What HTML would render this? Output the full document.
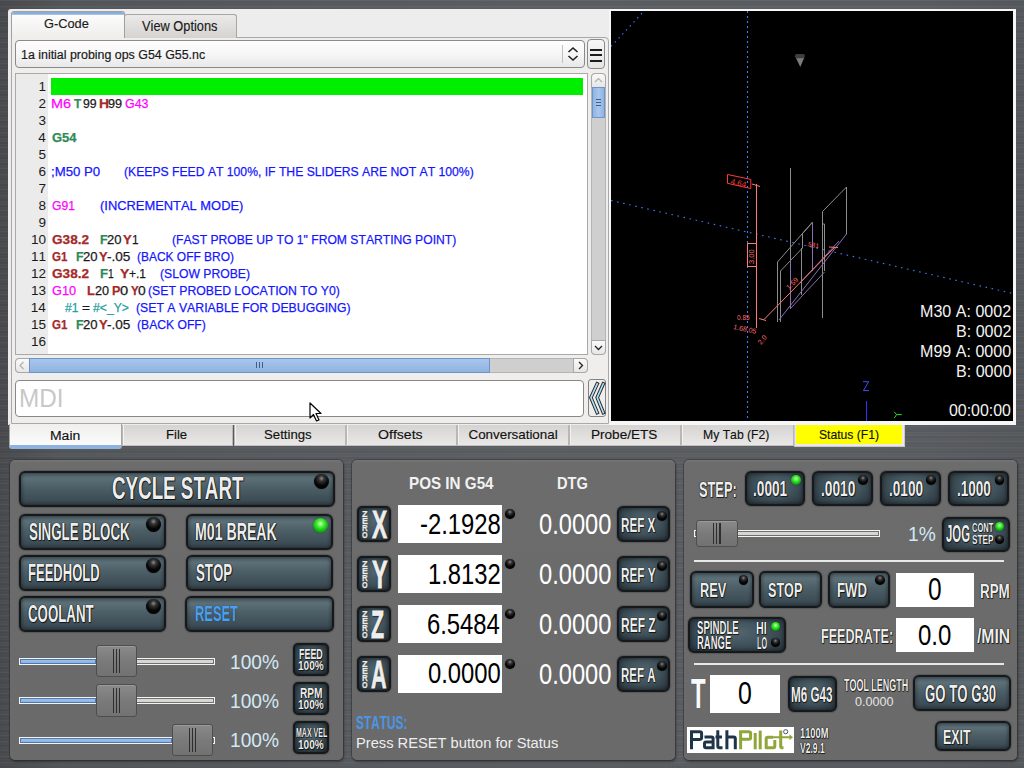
<!DOCTYPE html><html><head><meta charset="utf-8"><style>
*{margin:0;padding:0;box-sizing:border-box}
html,body{width:1024px;height:768px;overflow:hidden}
body{position:relative;font-family:"Liberation Sans",sans-serif;
 background:#484a4d;}
.a{position:absolute}
.t{position:absolute;white-space:pre;line-height:1;transform-origin:0 0;font-kerning:none;font-family:"Liberation Sans",sans-serif}
</style></head><body><div class="a" style="left:0px;top:0px;width:1024px;height:768px;background:repeating-linear-gradient(180deg,rgba(255,255,255,0.035) 0px,rgba(0,0,0,0.035) 2px,rgba(255,255,255,0.0) 3px),repeating-linear-gradient(180deg,rgba(255,255,255,0.03) 0px,rgba(0,0,0,0.04) 3px,rgba(255,255,255,0.02) 7px),linear-gradient(90deg,#47494d 0%,#53565a 6%,#5b5e62 50%,#5a5d61 90%,#55585c 100%)"></div><div class="a" style="left:8px;top:9px;width:601px;height:416px;background:#ededed;border-top-left-radius:3px;"></div><div class="a" style="left:11px;top:37px;width:598px;height:387px;border:1px solid #a8a8a8;border-top-right-radius:4px;background:#efeeed;"></div><div class="a" style="left:124px;top:14px;width:113px;height:24px;background:linear-gradient(180deg,#ebeae8,#d5d3d1);border:1px solid #a9a7a5;border-bottom:none;border-radius:3px 3px 0 0;"></div><div class="a" style="left:11px;top:11px;width:114px;height:27px;background:linear-gradient(180deg,#fdfdfd,#efeeed);border:1px solid #a0a0a0;border-bottom:none;border-radius:3px 3px 0 0;"></div><div class="a" style="left:12px;top:12px;width:112px;height:3px;background:#88aedc;border-radius:2px 2px 0 0;border-bottom:1px solid #a9c3e6"></div><div class="t" style="left:44.05px;top:16.580px;font-size:13.37px;color:#1a1a1a;transform:scaleX(0.9594);-webkit-text-stroke:0.15px #1a1a1a;">G-Code</div><div class="t" style="left:142.14px;top:19.882px;font-size:13.81px;color:#1a1a1a;transform:scaleX(0.9282);-webkit-text-stroke:0.15px #1a1a1a;">View Options</div><div class="a" style="left:15px;top:40px;width:570px;height:28px;background:linear-gradient(180deg,#fefefe 0%,#f6f6f6 50%,#e8e8e8 100%);border:1px solid #8c8a88;border-radius:4px;"></div><div class="a" style="left:562px;top:45px;width:1px;height:18px;background:#c0c0c0"></div><svg class="a" style="left:566px;top:46px" width="14" height="16"><path d="M2.5 6 L7 2 L11.5 6 M2.5 10 L7 14 L11.5 10" fill="none" stroke="#222" stroke-width="1.6"/></svg><div class="t" style="left:20.85px;top:48.003px;font-size:13.52px;color:#1a1a1a;transform:scaleX(0.9178);-webkit-text-stroke:0.2px #1a1a1a;">1a initial probing ops G54 G55.nc</div><div class="a" style="left:587px;top:39px;width:18px;height:30px;background:linear-gradient(180deg,#f6f6f6,#e4e4e4);border:1px solid #8c8a88;border-radius:4px;"></div><div class="a" style="left:590px;top:49px;width:12px;height:2px;background:#1a1a1a"></div><div class="a" style="left:590px;top:54px;width:12px;height:2px;background:#1a1a1a"></div><div class="a" style="left:590px;top:60px;width:12px;height:2px;background:#1a1a1a"></div><div class="a" style="left:15px;top:73px;width:573px;height:282px;background:#fff;border:1px solid #a9a9a9;"></div><div class="a" style="left:16px;top:74px;width:32px;height:280px;background:#ebebeb"></div><div class="a" style="left:51px;top:78px;width:532px;height:17px;background:#00ee00"></div><div class="t" style="left:38.54px;top:80.003px;font-size:13.52px;color:#1a1a1a;">1</div><div class="t" style="left:38.56px;top:97.003px;font-size:13.52px;color:#1a1a1a;">2</div><div class="t" style="left:38.48px;top:114.003px;font-size:13.52px;color:#1a1a1a;">3</div><div class="t" style="left:38.28px;top:131.003px;font-size:13.52px;color:#1a1a1a;">4</div><div class="t" style="left:38.45px;top:148.003px;font-size:13.52px;color:#1a1a1a;">5</div><div class="t" style="left:38.48px;top:165.003px;font-size:13.52px;color:#1a1a1a;">6</div><div class="t" style="left:38.56px;top:182.003px;font-size:13.52px;color:#1a1a1a;">7</div><div class="t" style="left:38.47px;top:199.003px;font-size:13.52px;color:#1a1a1a;">8</div><div class="t" style="left:38.52px;top:216.003px;font-size:13.52px;color:#1a1a1a;">9</div><div class="t" style="left:30.89px;top:233.003px;font-size:13.52px;color:#1a1a1a;">10</div><div class="t" style="left:31.02px;top:250.003px;font-size:13.52px;color:#1a1a1a;">11</div><div class="t" style="left:31.04px;top:267.003px;font-size:13.52px;color:#1a1a1a;">12</div><div class="t" style="left:30.96px;top:284.003px;font-size:13.52px;color:#1a1a1a;">13</div><div class="t" style="left:30.76px;top:301.003px;font-size:13.52px;color:#1a1a1a;">14</div><div class="t" style="left:30.93px;top:318.003px;font-size:13.52px;color:#1a1a1a;">15</div><div class="t" style="left:30.96px;top:335.003px;font-size:13.52px;color:#1a1a1a;">16</div><div class="t" style="left:51.42px;top:97.045px;font-size:13.44px;color:#ff00ff;transform:scaleX(1.0720);-webkit-text-stroke:0.25px #ff00ff;">M6</div><div class="t" style="left:73.57px;top:97.045px;font-size:13.44px;font-weight:bold;color:#2e8b57;transform:scaleX(0.8845);-webkit-text-stroke:0.25px #2e8b57;">T</div><div class="t" style="left:82.52px;top:97.045px;font-size:13.44px;color:#1a1a1a;transform:scaleX(0.9136);-webkit-text-stroke:0.25px #1a1a1a;">99</div><div class="t" style="left:98.57px;top:97.045px;font-size:13.44px;font-weight:bold;color:#a52a2a;transform:scaleX(1.0378);-webkit-text-stroke:0.25px #a52a2a;">H</div><div class="t" style="left:108.31px;top:97.045px;font-size:13.44px;color:#1a1a1a;transform:scaleX(0.9428);-webkit-text-stroke:0.25px #1a1a1a;">99</div><div class="t" style="left:124.98px;top:97.045px;font-size:13.44px;color:#ff00ff;transform:scaleX(0.9239);-webkit-text-stroke:0.25px #ff00ff;">G43</div><div class="t" style="left:52.07px;top:131.045px;font-size:13.44px;font-weight:bold;color:#2e8b57;transform:scaleX(0.9605);-webkit-text-stroke:0.25px #2e8b57;">G54</div><div class="t" style="left:50.82px;top:165.045px;font-size:13.44px;color:#1515ff;transform:scaleX(0.9810);-webkit-text-stroke:0.25px #1515ff;">;M50 P0</div><div class="t" style="left:123.94px;top:165.045px;font-size:13.44px;color:#1515ff;transform:scaleX(0.9059);-webkit-text-stroke:0.25px #1515ff;">(KEEPS FEED AT 100%, IF THE SLIDERS ARE NOT AT 100%)</div><div class="t" style="left:51.99px;top:199.045px;font-size:13.44px;color:#ff00ff;transform:scaleX(0.9015);-webkit-text-stroke:0.25px #ff00ff;">G91</div><div class="t" style="left:99.70px;top:199.045px;font-size:13.44px;color:#1515ff;transform:scaleX(0.9603);-webkit-text-stroke:0.25px #1515ff;">(INCREMENTAL MODE)</div><div class="t" style="left:51.84px;top:233.045px;font-size:13.44px;font-weight:bold;color:#a52a2a;transform:scaleX(1.0134);-webkit-text-stroke:0.25px #a52a2a;">G38.2</div><div class="t" style="left:99.87px;top:233.045px;font-size:13.44px;font-weight:bold;color:#2e8b57;transform:scaleX(0.9240);-webkit-text-stroke:0.25px #2e8b57;">F</div><div class="t" style="left:107.05px;top:233.045px;font-size:13.44px;color:#1a1a1a;transform:scaleX(0.9674);-webkit-text-stroke:0.25px #1a1a1a;">20</div><div class="t" style="left:122.68px;top:233.045px;font-size:13.44px;font-weight:bold;color:#a52a2a;transform:scaleX(0.9744);-webkit-text-stroke:0.25px #a52a2a;">Y</div><div class="t" style="left:131.50px;top:233.045px;font-size:13.44px;color:#1a1a1a;transform:scaleX(0.8801);-webkit-text-stroke:0.25px #1a1a1a;">1</div><div class="t" style="left:172.25px;top:233.045px;font-size:13.44px;color:#1515ff;transform:scaleX(0.9036);-webkit-text-stroke:0.25px #1515ff;">(FAST PROBE UP TO 1" FROM STARTING POINT)</div><div class="t" style="left:51.93px;top:250.045px;font-size:13.44px;font-weight:bold;color:#a52a2a;transform:scaleX(0.8586);-webkit-text-stroke:0.25px #a52a2a;">G1</div><div class="t" style="left:75.77px;top:250.045px;font-size:13.44px;font-weight:bold;color:#2e8b57;transform:scaleX(0.9240);-webkit-text-stroke:0.25px #2e8b57;">F</div><div class="t" style="left:82.84px;top:250.045px;font-size:13.44px;color:#1a1a1a;transform:scaleX(0.9747);-webkit-text-stroke:0.25px #1a1a1a;">20</div><div class="t" style="left:98.58px;top:250.045px;font-size:13.44px;font-weight:bold;color:#a52a2a;transform:scaleX(0.9627);-webkit-text-stroke:0.25px #a52a2a;">Y</div><div class="t" style="left:107.10px;top:250.045px;font-size:13.44px;color:#1a1a1a;transform:scaleX(1.0092);-webkit-text-stroke:0.25px #1a1a1a;">-.05</div><div class="t" style="left:136.76px;top:250.045px;font-size:13.44px;color:#1515ff;transform:scaleX(0.8896);-webkit-text-stroke:0.25px #1515ff;">(BACK OFF BRO)</div><div class="t" style="left:51.84px;top:267.045px;font-size:13.44px;font-weight:bold;color:#a52a2a;transform:scaleX(1.0134);-webkit-text-stroke:0.25px #a52a2a;">G38.2</div><div class="t" style="left:99.82px;top:267.045px;font-size:13.44px;font-weight:bold;color:#2e8b57;transform:scaleX(0.9826);-webkit-text-stroke:0.25px #2e8b57;">F</div><div class="t" style="left:107.52px;top:267.045px;font-size:13.44px;color:#1a1a1a;transform:scaleX(0.7593);-webkit-text-stroke:0.25px #1a1a1a;">1</div><div class="t" style="left:120.16px;top:267.045px;font-size:13.44px;font-weight:bold;color:#a52a2a;transform:scaleX(1.0390);-webkit-text-stroke:0.25px #a52a2a;">Y</div><div class="t" style="left:129.31px;top:267.045px;font-size:13.44px;color:#1a1a1a;transform:scaleX(0.8932);-webkit-text-stroke:0.25px #1a1a1a;">+.1</div><div class="t" style="left:159.64px;top:267.045px;font-size:13.44px;color:#1515ff;transform:scaleX(0.9063);-webkit-text-stroke:0.25px #1515ff;">(SLOW PROBE)</div><div class="t" style="left:51.86px;top:284.045px;font-size:13.44px;color:#ff00ff;transform:scaleX(0.9503);-webkit-text-stroke:0.25px #ff00ff;">G10</div><div class="t" style="left:87.34px;top:284.045px;font-size:13.44px;font-weight:bold;color:#a52a2a;transform:scaleX(0.9569);-webkit-text-stroke:0.25px #a52a2a;">L</div><div class="t" style="left:94.97px;top:284.045px;font-size:13.44px;color:#1a1a1a;transform:scaleX(0.9383);-webkit-text-stroke:0.25px #1a1a1a;">20</div><div class="t" style="left:111.56px;top:284.045px;font-size:13.44px;font-weight:bold;color:#a52a2a;transform:scaleX(0.9335);-webkit-text-stroke:0.25px #a52a2a;">P</div><div class="t" style="left:120.43px;top:284.045px;font-size:13.44px;color:#1a1a1a;transform:scaleX(1.0895);-webkit-text-stroke:0.25px #1a1a1a;">0</div><div class="t" style="left:130.70px;top:284.045px;font-size:13.44px;font-weight:bold;color:#a52a2a;transform:scaleX(0.8570);-webkit-text-stroke:0.25px #a52a2a;">Y</div><div class="t" style="left:138.46px;top:284.045px;font-size:13.44px;color:#1a1a1a;transform:scaleX(1.0273);-webkit-text-stroke:0.25px #1a1a1a;">0</div><div class="t" style="left:148.34px;top:284.045px;font-size:13.44px;color:#1515ff;transform:scaleX(0.9109);-webkit-text-stroke:0.25px #1515ff;">(SET PROBED LOCATION TO Y0)</div><div class="t" style="left:65.05px;top:301.045px;font-size:13.44px;color:#20a0a0;transform:scaleX(0.8922);-webkit-text-stroke:0.25px #20a0a0;">#1</div><div class="t" style="left:81.64px;top:301.045px;font-size:13.44px;color:#1a1a1a;transform:scaleX(1.0108);-webkit-text-stroke:0.25px #1a1a1a;">=</div><div class="t" style="left:92.65px;top:301.045px;font-size:13.44px;color:#20a0a0;transform:scaleX(0.9075);-webkit-text-stroke:0.25px #20a0a0;">#&lt;_Y&gt;</div><div class="t" style="left:136.14px;top:301.045px;font-size:13.44px;color:#1515ff;transform:scaleX(0.9124);-webkit-text-stroke:0.25px #1515ff;">(SET A VARIABLE FOR DEBUGGING)</div><div class="t" style="left:51.93px;top:318.045px;font-size:13.44px;font-weight:bold;color:#a52a2a;transform:scaleX(0.8586);-webkit-text-stroke:0.25px #a52a2a;">G1</div><div class="t" style="left:75.77px;top:318.045px;font-size:13.44px;font-weight:bold;color:#2e8b57;transform:scaleX(0.9240);-webkit-text-stroke:0.25px #2e8b57;">F</div><div class="t" style="left:82.84px;top:318.045px;font-size:13.44px;color:#1a1a1a;transform:scaleX(0.9747);-webkit-text-stroke:0.25px #1a1a1a;">20</div><div class="t" style="left:98.58px;top:318.045px;font-size:13.44px;font-weight:bold;color:#a52a2a;transform:scaleX(0.9627);-webkit-text-stroke:0.25px #a52a2a;">Y</div><div class="t" style="left:107.10px;top:318.045px;font-size:13.44px;color:#1a1a1a;transform:scaleX(1.0092);-webkit-text-stroke:0.25px #1a1a1a;">-.05</div><div class="t" style="left:136.75px;top:318.045px;font-size:13.44px;color:#1515ff;transform:scaleX(0.9035);-webkit-text-stroke:0.25px #1515ff;">(BACK OFF)</div><div class="a" style="left:591px;top:73px;width:15px;height:282px;background:#cfcfcf;border:1px solid #b4b4b4;border-radius:4px;"></div><div class="a" style="left:591px;top:73px;width:15px;height:15px;background:linear-gradient(180deg,#fafafa,#e6e6e6);border:1px solid #a8a8a8;border-radius:4px 4px 0 0;"></div><svg class="a" style="left:593px;top:76px" width="11" height="9"><path d="M2 6 L5.5 2.5 L9 6" fill="none" stroke="#b0b0b0" stroke-width="1.2"/></svg><div class="a" style="left:592px;top:87px;width:13px;height:31px;background:linear-gradient(90deg,#8fb3e0,#a9c6ec 50%,#8fb3e0);border:1px solid #6d94c8;"></div><div class="a" style="left:596px;top:99px;width:5px;height:1px;background:#3d5f8f"></div><div class="a" style="left:596px;top:102px;width:5px;height:1px;background:#3d5f8f"></div><div class="a" style="left:596px;top:105px;width:5px;height:1px;background:#3d5f8f"></div><div class="a" style="left:591px;top:340px;width:15px;height:15px;background:linear-gradient(180deg,#fafafa,#e6e6e6);border:1px solid #a8a8a8;border-radius:0 0 4px 4px;"></div><svg class="a" style="left:593px;top:343px" width="11" height="9"><path d="M2 3 L5.5 6.5 L9 3" fill="none" stroke="#222" stroke-width="1.3"/></svg><div class="a" style="left:15px;top:358px;width:573px;height:15px;background:#cfcfcf;border:1px solid #b4b4b4;border-radius:4px;"></div><div class="a" style="left:15px;top:358px;width:15px;height:15px;background:linear-gradient(180deg,#fafafa,#e6e6e6);border:1px solid #a8a8a8;border-radius:4px 0 0 4px;"></div><svg class="a" style="left:17px;top:360px" width="11" height="11"><path d="M6.5 2 L3 5.5 L6.5 9" fill="none" stroke="#b0b0b0" stroke-width="1.2"/></svg><div class="a" style="left:29px;top:358px;width:461px;height:15px;background:linear-gradient(180deg,#a9c6ec,#8fb3e0);border:1px solid #6d94c8;"></div><div class="a" style="left:256px;top:362px;width:1px;height:6px;background:#3d5f8f"></div><div class="a" style="left:259px;top:362px;width:1px;height:6px;background:#3d5f8f"></div><div class="a" style="left:262px;top:362px;width:1px;height:6px;background:#3d5f8f"></div><div class="a" style="left:573px;top:358px;width:15px;height:15px;background:linear-gradient(180deg,#fafafa,#e6e6e6);border:1px solid #a8a8a8;border-radius:0 4px 4px 0;"></div><svg class="a" style="left:575px;top:360px" width="11" height="11"><path d="M4 2 L7.5 5.5 L4 9" fill="none" stroke="#222" stroke-width="1.3"/></svg><div class="a" style="left:15px;top:380px;width:569px;height:37px;background:#fff;border:1px solid #8a8886;border-radius:4px;"></div><div class="t" style="left:18.51px;top:385.657px;font-size:25.00px;color:#c8c8c8;transform:scaleX(0.9719);">MDI</div><div class="a" style="left:588px;top:379px;width:18px;height:38px;background:#efeeed;border:1px solid #858381;border-radius:3px;"></div><svg class="a" style="left:588px;top:379px" width="18" height="38"><path d="M9.2 4.8 L2.9 18.6 L9.2 33.6 M15.3 4.8 L9.2 18.6 L15.3 33.6" fill="none" stroke="#2a2a2a" stroke-width="3.6" stroke-linecap="square" stroke-linejoin="miter"/><path d="M9.2 4.8 L2.9 18.6 L9.2 33.6 M15.3 4.8 L9.2 18.6 L15.3 33.6" fill="none" stroke="#aee0fb" stroke-width="1.6" stroke-linecap="square"/></svg><div class="a" style="left:609px;top:9px;width:407px;height:416px;background:#f6f6f6;"></div><div class="a" style="left:611px;top:11px;width:402px;height:410px;background:#000;"></div><svg class="a" style="left:611px;top:11px" width="402" height="410" viewBox="611 11 402 410">
<g fill="none" stroke-linecap="butt">
<line x1="747.5" y1="11" x2="747.5" y2="421" stroke="#3d7bf0" stroke-width="1.1" stroke-dasharray="2 3"/>
<line x1="611" y1="46.5" x2="645" y2="10" stroke="#3d7bf0" stroke-width="1.1" stroke-dasharray="1.5 4"/>
<line x1="611" y1="200.5" x2="1013" y2="293.5" stroke="#3d7bf0" stroke-width="1.1" stroke-dasharray="1.6 4.6"/>
<line x1="866.5" y1="401" x2="866.5" y2="421" stroke="#3030ff" stroke-width="1"/>
</g>
<path d="M795.5 57 L804.5 57 L800.3 67 Z" fill="#7c7c7c"/><path d="M796 54 H804 L805 56 L803.5 58.3 H796.5 L794.5 56.3 Z" fill="#3e3e3e"/>
<g fill="none" stroke="#8c8c8c" stroke-width="1">
<line x1="790.5" y1="168" x2="790.5" y2="309"/>
<polyline points="822.5,318 822.5,211.5 846.5,187 846.5,234"/>
<polyline points="777.5,322 777.5,262 812.5,222"/>
<polyline points="780.5,322 780.5,271 802.5,248 802.5,233.5 812.5,222.5"/>
<line x1="801.5" y1="248" x2="801.5" y2="295"/>
<polyline points="824.5,271 824.5,224 822.5,224"/>
</g>
<g fill="none" stroke="#8a6fb0" stroke-width="1">
<line x1="790.5" y1="260" x2="790.5" y2="309"/>
<line x1="812.5" y1="222" x2="812.5" y2="271"/>
<line x1="846.5" y1="234" x2="779" y2="320"/>
<line x1="824.5" y1="272" x2="790" y2="309"/>
<line x1="839" y1="241" x2="800" y2="283"/>
</g>
<g fill="none" stroke="#ff7878" stroke-width="1">
<line x1="756.5" y1="184" x2="756.5" y2="328"/>
<polyline points="752,184 760,186.5"/>
<line x1="764" y1="319.5" x2="835" y2="247"/>
<polyline points="759,318.5 766,320.5"/>
<polyline points="829,247 838,247.5"/>
<polygon points="727.5,174.5 750.8,179.4 750.8,188.5 727.5,183.3" stroke="#ff3838"/>
<rect x="747.5" y="243.5" width="9" height="23"/>
</g>
<g fill="#ff6a6a" font-family="Liberation Sans" font-size="7">
<text x="730.5" y="184" transform="rotate(12 730 183)" fill="#ff3838" font-size="8">4.64</text>
<text x="754" y="264" transform="rotate(-90 754 264)" font-size="7.5">3.00</text>
<text x="737" y="320" font-size="6.5">0.85</text>
<text x="733" y="329" font-size="7" transform="rotate(12 733 329)">1.68.05</text>
<text x="761" y="345" font-size="7" transform="rotate(-50 761 345)">2.0</text>
<text x="806" y="246" font-size="6.5" transform="rotate(10 806 246)">.581</text>
<text x="789" y="290" font-size="7" transform="rotate(-45 789 290)">1.59</text>
</g>
<g stroke="#22dd22" stroke-width="1" fill="none"><polyline points="894.2,411.8 896.6,414.6 894.2,418.2"/><line x1="896.6" y1="414.6" x2="901.8" y2="414.6"/></g><path d="M863 381.7 H868.7 L863.4 390.6 H869" fill="none" stroke="#4848ff" stroke-width="1"/>
</svg><div class="t" style="left:920.08px;top:302.797px;font-size:16.42px;color:#f4f4f4;transform:scaleX(0.9798);">M30 A: 0002</div><div class="t" style="left:955.85px;top:323.297px;font-size:16.42px;color:#f4f4f4;transform:scaleX(0.9798);">B: 0002</div><div class="t" style="left:919.90px;top:342.797px;font-size:16.42px;color:#f4f4f4;transform:scaleX(0.9798);">M99 A: 0000</div><div class="t" style="left:955.67px;top:363.297px;font-size:16.42px;color:#f4f4f4;transform:scaleX(0.9798);">B: 0000</div><div class="t" style="left:949.18px;top:402.961px;font-size:15.99px;color:#f4f4f4;transform:scaleX(0.9952);">00:00:00</div><div class="a" style="left:121.6px;top:425px;width:111.9px;height:21px;background:linear-gradient(180deg,#d6d4d2,#e9e8e6);border-left:1px solid #b9b7b5;border-right:1px solid #b9b7b5;border-bottom:1px solid #c4c2c0;box-shadow:inset 1px 0 0 #f2f2f2;"></div><div class="a" style="left:233.5px;top:425px;width:112.0px;height:21px;background:linear-gradient(180deg,#d6d4d2,#e9e8e6);border-left:1px solid #b9b7b5;border-right:1px solid #b9b7b5;border-bottom:1px solid #c4c2c0;box-shadow:inset 1px 0 0 #f2f2f2;"></div><div class="a" style="left:345.5px;top:425px;width:111.80000000000001px;height:21px;background:linear-gradient(180deg,#d6d4d2,#e9e8e6);border-left:1px solid #b9b7b5;border-right:1px solid #b9b7b5;border-bottom:1px solid #c4c2c0;box-shadow:inset 1px 0 0 #f2f2f2;"></div><div class="a" style="left:457.3px;top:425px;width:112.09999999999997px;height:21px;background:linear-gradient(180deg,#d6d4d2,#e9e8e6);border-left:1px solid #b9b7b5;border-right:1px solid #b9b7b5;border-bottom:1px solid #c4c2c0;box-shadow:inset 1px 0 0 #f2f2f2;"></div><div class="a" style="left:569.4px;top:425px;width:111.20000000000005px;height:21px;background:linear-gradient(180deg,#d6d4d2,#e9e8e6);border-left:1px solid #b9b7b5;border-right:1px solid #b9b7b5;border-bottom:1px solid #c4c2c0;box-shadow:inset 1px 0 0 #f2f2f2;"></div><div class="a" style="left:680.6px;top:425px;width:113.0px;height:21px;background:linear-gradient(180deg,#d6d4d2,#e9e8e6);border-left:1px solid #b9b7b5;border-right:1px solid #b9b7b5;border-bottom:1px solid #c4c2c0;box-shadow:inset 1px 0 0 #f2f2f2;"></div><div class="a" style="left:793.6px;top:425px;width:111.39999999999998px;height:22px;background:#e9e9e9;border:1px solid #c8c8c8;border-top:none;"></div><div class="a" style="left:796.1px;top:425px;width:106.39999999999998px;height:18.5px;background:#ffff00;"></div><div class="a" style="left:9px;top:424px;width:113px;height:25px;background:linear-gradient(180deg,#f0efee,#fdfdfd);border:1px solid #a6a6a6;border-top:none;border-radius:0 0 3px 3px;"></div><div class="a" style="left:10px;top:445px;width:111px;height:4px;background:#8eb2de;border-radius:0 0 3px 3px;"></div><div class="t" style="left:49.66px;top:428.700px;font-size:13.08px;color:#111;transform:scaleX(1.0670);-webkit-text-stroke:0.15px #111;">Main</div><div class="t" style="left:166.42px;top:427.700px;font-size:13.08px;color:#111;transform:scaleX(1.0040);-webkit-text-stroke:0.15px #111;">File</div><div class="t" style="left:264.40px;top:427.700px;font-size:13.08px;color:#111;transform:scaleX(1.0088);-webkit-text-stroke:0.15px #111;">Settings</div><div class="t" style="left:378.33px;top:427.700px;font-size:13.08px;color:#111;transform:scaleX(1.0784);-webkit-text-stroke:0.15px #111;">Offsets</div><div class="t" style="left:468.52px;top:427.580px;font-size:13.37px;color:#111;-webkit-text-stroke:0.15px #111;">Conversational</div><div class="t" style="left:591.19px;top:427.580px;font-size:13.37px;color:#111;transform:scaleX(1.0160);-webkit-text-stroke:0.15px #111;">Probe/ETS</div><div class="t" style="left:703.30px;top:427.580px;font-size:13.37px;color:#111;transform:scaleX(0.9129);-webkit-text-stroke:0.15px #111;">My Tab (F2)</div><div class="t" style="left:818.95px;top:427.580px;font-size:13.37px;color:#111;transform:scaleX(0.9090);-webkit-text-stroke:0.15px #111;">Status (F1)</div><div class="a" style="left:10px;top:460px;width:333px;height:300px;background:linear-gradient(180deg,#757575 0px,#6c6c6c 3px,#6a6a6a 100%);border-radius:5px;box-shadow:0 0 0 1px rgba(40,40,40,0.45),1px 2px 3px rgba(0,0,0,0.35);"></div><div class="a" style="left:352px;top:460px;width:323px;height:300px;background:linear-gradient(180deg,#757575 0px,#6c6c6c 3px,#6a6a6a 100%);border-radius:5px;box-shadow:0 0 0 1px rgba(40,40,40,0.45),1px 2px 3px rgba(0,0,0,0.35);"></div><div class="a" style="left:684px;top:460px;width:333px;height:300px;background:linear-gradient(180deg,#757575 0px,#6c6c6c 3px,#6a6a6a 100%);border-radius:5px;box-shadow:0 0 0 1px rgba(40,40,40,0.45),1px 2px 3px rgba(0,0,0,0.35);"></div><div class="a" style="left:18.5px;top:471px;width:316.0px;height:36px;background:linear-gradient(180deg,#51636b 0%,#5c6e76 18%,#4c5e66 45%,#3f4f57 80%,#36454d 100%);border:2px solid #15191b;border-radius:6px;box-shadow:inset 0 0 4px rgba(0,0,0,0.55),0 0 1px 1px rgba(0,0,0,0.18);"></div><div class="a" style="left:18.5px;top:513.5px;width:147.5px;height:36.0px;background:linear-gradient(180deg,#51636b 0%,#5c6e76 18%,#4c5e66 45%,#3f4f57 80%,#36454d 100%);border:2px solid #15191b;border-radius:6px;box-shadow:inset 0 0 4px rgba(0,0,0,0.55),0 0 1px 1px rgba(0,0,0,0.18);"></div><div class="a" style="left:185.5px;top:513.5px;width:147.0px;height:36.0px;background:linear-gradient(180deg,#51636b 0%,#5c6e76 18%,#4c5e66 45%,#3f4f57 80%,#36454d 100%);border:2px solid #15191b;border-radius:6px;box-shadow:inset 0 0 4px rgba(0,0,0,0.55),0 0 1px 1px rgba(0,0,0,0.18);"></div><div class="a" style="left:18.5px;top:555px;width:147.5px;height:35.5px;background:linear-gradient(180deg,#51636b 0%,#5c6e76 18%,#4c5e66 45%,#3f4f57 80%,#36454d 100%);border:2px solid #15191b;border-radius:6px;box-shadow:inset 0 0 4px rgba(0,0,0,0.55),0 0 1px 1px rgba(0,0,0,0.18);"></div><div class="a" style="left:185.5px;top:554.5px;width:147.0px;height:36.0px;background:linear-gradient(180deg,#51636b 0%,#5c6e76 18%,#4c5e66 45%,#3f4f57 80%,#36454d 100%);border:2px solid #15191b;border-radius:6px;box-shadow:inset 0 0 4px rgba(0,0,0,0.55),0 0 1px 1px rgba(0,0,0,0.18);"></div><div class="a" style="left:18.5px;top:596px;width:147.5px;height:35.5px;background:linear-gradient(180deg,#51636b 0%,#5c6e76 18%,#4c5e66 45%,#3f4f57 80%,#36454d 100%);border:2px solid #15191b;border-radius:6px;box-shadow:inset 0 0 4px rgba(0,0,0,0.55),0 0 1px 1px rgba(0,0,0,0.18);"></div><div class="a" style="left:184.5px;top:596px;width:149.5px;height:35.5px;background:linear-gradient(180deg,#51636b 0%,#5c6e76 18%,#4c5e66 45%,#3f4f57 80%,#36454d 100%);border:2px solid #15191b;border-radius:6px;box-shadow:inset 0 0 4px rgba(0,0,0,0.55),0 0 1px 1px rgba(0,0,0,0.18);"></div><div class="t" style="left:112.03px;top:473.636px;font-size:30.96px;font-weight:bold;color:#eeeeee;transform:scaleX(0.6066);text-shadow:0 0 1px #000,0 0 1px #000,1px 1px 1px rgba(0,0,0,0.7);">CYCLE START</div><div class="t" style="left:28.62px;top:520.760px;font-size:23.55px;font-weight:bold;color:#eeeeee;transform:scaleX(0.5660);text-shadow:0 0 1px #000,0 0 1px #000,1px 1px 1px rgba(0,0,0,0.7);">SINGLE BLOCK</div><div class="t" style="left:195.25px;top:520.881px;font-size:23.26px;font-weight:bold;color:#eeeeee;transform:scaleX(0.6084);text-shadow:0 0 1px #000,0 0 1px #000,1px 1px 1px rgba(0,0,0,0.7);">M01 BREAK</div><div class="t" style="left:28.13px;top:561.837px;font-size:23.40px;font-weight:bold;color:#eeeeee;transform:scaleX(0.5573);text-shadow:0 0 1px #000,0 0 1px #000,1px 1px 1px rgba(0,0,0,0.7);">FEEDHOLD</div><div class="t" style="left:196.32px;top:560.640px;font-size:23.84px;font-weight:bold;color:#eeeeee;transform:scaleX(0.5583);text-shadow:0 0 1px #000,0 0 1px #000,1px 1px 1px rgba(0,0,0,0.7);">STOP</div><div class="t" style="left:28.46px;top:601.640px;font-size:23.84px;font-weight:bold;color:#eeeeee;transform:scaleX(0.5573);text-shadow:0 0 1px #000,0 0 1px #000,1px 1px 1px rgba(0,0,0,0.7);">COOLANT</div><div class="t" style="left:194.64px;top:603.017px;font-size:21.80px;font-weight:bold;color:#4a9ff0;transform:scaleX(0.5916);text-shadow:0 0 1px #1a2a3a;">RESET</div><div class="a" style="left:313.9px;top:474.4px;width:15px;height:15px;border-radius:50%;background:radial-gradient(circle at 50% 30%,#8a8a8a 0%,#333 22%,#050505 55%,#000 100%);box-shadow:0 0 1px rgba(0,0,0,0.6)"></div><div class="a" style="left:145.9px;top:517.2px;width:15px;height:15px;border-radius:50%;background:radial-gradient(circle at 50% 30%,#8a8a8a 0%,#333 22%,#050505 55%,#000 100%);box-shadow:0 0 1px rgba(0,0,0,0.6)"></div><div class="a" style="left:313.0px;top:517.5px;width:15px;height:15px;border-radius:50%;background:radial-gradient(circle at 50% 38%,#c9ffb8 0%,#4ef03c 28%,#12b812 60%,#066006 100%);box-shadow:0 0 1px rgba(0,0,0,0.6)"></div><div class="a" style="left:145.9px;top:558.2px;width:15px;height:15px;border-radius:50%;background:radial-gradient(circle at 50% 30%,#8a8a8a 0%,#333 22%,#050505 55%,#000 100%);box-shadow:0 0 1px rgba(0,0,0,0.6)"></div><div class="a" style="left:145.9px;top:599.4px;width:15px;height:15px;border-radius:50%;background:radial-gradient(circle at 50% 30%,#8a8a8a 0%,#333 22%,#050505 55%,#000 100%);box-shadow:0 0 1px rgba(0,0,0,0.6)"></div><div class="a" style="left:19px;top:658.2px;width:195.7px;height:7.0px;background:#d6d6d4;border:1px solid #f6f4f0;box-shadow:inset 0 0 0 1px #707070;"></div><div class="a" style="left:19px;top:658.2px;width:76.5px;height:7.0px;background:linear-gradient(180deg,#a3c3ec,#88afe0);border:1px solid #f6f4f0;border-right:none;box-shadow:inset 0 0 0 1px #4d78b0;"></div><div class="a" style="left:95.5px;top:645.3px;width:41.900000000000006px;height:32.0px;background:linear-gradient(180deg,#8a8a8a,#7a7a7a 50%,#727272);border:1px solid #4e4e4e;border-radius:3px;box-shadow:inset 0 1px 0 rgba(255,255,255,0.15)"></div><div class="a" style="left:112.95px;top:649.3px;width:1.5px;height:24.0px;background:#2e2e2e"></div><div class="a" style="left:115.95px;top:649.3px;width:1.5px;height:24.0px;background:#2e2e2e"></div><div class="a" style="left:118.95px;top:649.3px;width:1.5px;height:24.0px;background:#2e2e2e"></div><div class="a" style="left:19px;top:697.3px;width:195.7px;height:7.0px;background:#d6d6d4;border:1px solid #f6f4f0;box-shadow:inset 0 0 0 1px #707070;"></div><div class="a" style="left:19px;top:697.3px;width:76.5px;height:7.0px;background:linear-gradient(180deg,#a3c3ec,#88afe0);border:1px solid #f6f4f0;border-right:none;box-shadow:inset 0 0 0 1px #4d78b0;"></div><div class="a" style="left:95.5px;top:684.4px;width:41.900000000000006px;height:32.200000000000045px;background:linear-gradient(180deg,#8a8a8a,#7a7a7a 50%,#727272);border:1px solid #4e4e4e;border-radius:3px;box-shadow:inset 0 1px 0 rgba(255,255,255,0.15)"></div><div class="a" style="left:112.95px;top:688.4px;width:1.5px;height:24.200000000000045px;background:#2e2e2e"></div><div class="a" style="left:115.95px;top:688.4px;width:1.5px;height:24.200000000000045px;background:#2e2e2e"></div><div class="a" style="left:118.95px;top:688.4px;width:1.5px;height:24.200000000000045px;background:#2e2e2e"></div><div class="a" style="left:19px;top:737px;width:195.7px;height:7px;background:#d6d6d4;border:1px solid #f6f4f0;box-shadow:inset 0 0 0 1px #707070;"></div><div class="a" style="left:19px;top:737px;width:152.5px;height:7px;background:linear-gradient(180deg,#a3c3ec,#88afe0);border:1px solid #f6f4f0;border-right:none;box-shadow:inset 0 0 0 1px #4d78b0;"></div><div class="a" style="left:171.5px;top:724.2px;width:41.900000000000006px;height:32.19999999999993px;background:linear-gradient(180deg,#8a8a8a,#7a7a7a 50%,#727272);border:1px solid #4e4e4e;border-radius:3px;box-shadow:inset 0 1px 0 rgba(255,255,255,0.15)"></div><div class="a" style="left:188.95px;top:728.2px;width:1.5px;height:24.199999999999932px;background:#2e2e2e"></div><div class="a" style="left:191.95px;top:728.2px;width:1.5px;height:24.199999999999932px;background:#2e2e2e"></div><div class="a" style="left:194.95px;top:728.2px;width:1.5px;height:24.199999999999932px;background:#2e2e2e"></div><div class="t" style="left:230.04px;top:652.861px;font-size:19.77px;color:#d2e8f4;transform:scaleX(0.9699);">100%</div><div class="t" style="left:230.04px;top:691.861px;font-size:19.77px;color:#d2e8f4;transform:scaleX(0.9699);">100%</div><div class="t" style="left:230.04px;top:730.861px;font-size:19.77px;color:#d2e8f4;transform:scaleX(0.9699);">100%</div><div class="a" style="left:293.1px;top:642.6px;width:35.599999999999966px;height:33.0px;background:radial-gradient(ellipse at 50% 42%,#52666f 0%,#41535c 45%,#28333a 100%);border:2px solid #15191b;border-radius:5px;box-shadow:inset 0 0 4px rgba(0,0,0,0.55),0 0 1px 1px rgba(0,0,0,0.18);"></div><div class="a" style="left:293.1px;top:681.5px;width:35.599999999999966px;height:33.10000000000002px;background:radial-gradient(ellipse at 50% 42%,#52666f 0%,#41535c 45%,#28333a 100%);border:2px solid #15191b;border-radius:5px;box-shadow:inset 0 0 4px rgba(0,0,0,0.55),0 0 1px 1px rgba(0,0,0,0.18);"></div><div class="a" style="left:293.1px;top:721.3px;width:35.599999999999966px;height:33.0px;background:radial-gradient(ellipse at 50% 42%,#52666f 0%,#41535c 45%,#28333a 100%);border:2px solid #15191b;border-radius:5px;box-shadow:inset 0 0 4px rgba(0,0,0,0.55),0 0 1px 1px rgba(0,0,0,0.18);"></div><div class="t" style="left:299.00px;top:646.718px;font-size:14.24px;font-weight:bold;color:#eeeeee;transform:scaleX(0.6259);text-shadow:0 0 1px #000,0 0 1px #000,1px 1px 1px rgba(0,0,0,0.7);">FEED</div><div class="t" style="left:298.06px;top:660.062px;font-size:12.21px;font-weight:bold;color:#eeeeee;transform:scaleX(0.8262);text-shadow:0 0 1px #000,0 0 1px #000,1px 1px 1px rgba(0,0,0,0.7);">100%</div><div class="t" style="left:299.72px;top:685.718px;font-size:14.24px;font-weight:bold;color:#eeeeee;transform:scaleX(0.7129);text-shadow:0 0 1px #000,0 0 1px #000,1px 1px 1px rgba(0,0,0,0.7);">RPM</div><div class="t" style="left:298.06px;top:699.062px;font-size:12.21px;font-weight:bold;color:#eeeeee;transform:scaleX(0.8262);text-shadow:0 0 1px #000,0 0 1px #000,1px 1px 1px rgba(0,0,0,0.7);">100%</div><div class="t" style="left:296.03px;top:725.959px;font-size:13.66px;font-weight:bold;color:#eeeeee;transform:scaleX(0.5136);text-shadow:0 0 1px #000,0 0 1px #000,1px 1px 1px rgba(0,0,0,0.7);">MAX VEL</div><div class="t" style="left:298.06px;top:739.062px;font-size:12.21px;font-weight:bold;color:#eeeeee;transform:scaleX(0.8262);text-shadow:0 0 1px #000,0 0 1px #000,1px 1px 1px rgba(0,0,0,0.7);">100%</div><div class="t" style="left:409.28px;top:475.048px;font-size:17.01px;font-weight:bold;color:#f2f2f2;transform:scaleX(0.8949);">POS IN G54</div><div class="t" style="left:556.52px;top:475.582px;font-size:15.70px;font-weight:bold;color:#f2f2f2;transform:scaleX(0.9320);">DTG</div><div class="a" style="left:357.2px;top:506px;width:34.10000000000002px;height:35.700000000000045px;background:radial-gradient(ellipse at 50% 42%,#52666f 0%,#41535c 45%,#28333a 100%);border:2px solid #15191b;border-radius:5px;box-shadow:inset 0 0 4px rgba(0,0,0,0.55),0 0 1px 1px rgba(0,0,0,0.18);"></div><div class="t" style="left:362.13px;top:509.610px;font-size:8.58px;font-weight:bold;color:#eeeeee;transform:scaleX(1.0552);text-shadow:0 0 1px #000;-webkit-text-stroke:0.25px #eee;">Z</div><div class="t" style="left:361.80px;top:516.610px;font-size:8.58px;font-weight:bold;color:#eeeeee;transform:scaleX(1.0387);text-shadow:0 0 1px #000;-webkit-text-stroke:0.25px #eee;">E</div><div class="t" style="left:361.87px;top:523.610px;font-size:8.58px;font-weight:bold;color:#eeeeee;transform:scaleX(0.9181);text-shadow:0 0 1px #000;-webkit-text-stroke:0.25px #eee;">R</div><div class="t" style="left:362.10px;top:530.610px;font-size:8.58px;font-weight:bold;color:#eeeeee;transform:scaleX(0.8387);text-shadow:0 0 1px #000;-webkit-text-stroke:0.25px #eee;">O</div><div class="t" style="left:371.70px;top:505.746px;font-size:38.95px;font-weight:bold;color:#eeeeee;transform:scaleX(0.5851);text-shadow:0 0 1px #000,0 0 1px #000,1px 1px 1px rgba(0,0,0,0.7);-webkit-text-stroke:0.9px #eee;">X</div><div class="a" style="left:398px;top:505px;width:104px;height:38px;background:#fff;"></div><div class="a" style="left:505.3px;top:509.4px;width:9.7px;height:9.7px;border-radius:50%;background:radial-gradient(circle at 50% 30%,#8a8a8a 0%,#333 22%,#050505 55%,#000 100%);box-shadow:0 0 1px rgba(0,0,0,0.6)"></div><div class="a" style="left:617.2px;top:505.5px;width:53.299999999999955px;height:36.89999999999998px;background:radial-gradient(ellipse at 50% 42%,#52666f 0%,#41535c 45%,#28333a 100%);border:2px solid #15191b;border-radius:6px;box-shadow:inset 0 0 4px rgba(0,0,0,0.55),0 0 1px 1px rgba(0,0,0,0.18);"></div><div class="t" style="left:620.82px;top:514.551px;font-size:20.49px;font-weight:bold;color:#eeeeee;transform:scaleX(0.5698);text-shadow:0 0 1px #000,0 0 1px #000,1px 1px 1px rgba(0,0,0,0.7);">REF X</div><div class="a" style="left:656.7px;top:511.1px;width:10px;height:10px;border-radius:50%;background:radial-gradient(circle at 50% 30%,#8a8a8a 0%,#333 22%,#050505 55%,#000 100%);box-shadow:0 0 1px rgba(0,0,0,0.6)"></div><div class="a" style="left:357.2px;top:556px;width:34.10000000000002px;height:35.700000000000045px;background:radial-gradient(ellipse at 50% 42%,#52666f 0%,#41535c 45%,#28333a 100%);border:2px solid #15191b;border-radius:5px;box-shadow:inset 0 0 4px rgba(0,0,0,0.55),0 0 1px 1px rgba(0,0,0,0.18);"></div><div class="t" style="left:362.13px;top:559.610px;font-size:8.58px;font-weight:bold;color:#eeeeee;transform:scaleX(1.0552);text-shadow:0 0 1px #000;-webkit-text-stroke:0.25px #eee;">Z</div><div class="t" style="left:361.80px;top:566.610px;font-size:8.58px;font-weight:bold;color:#eeeeee;transform:scaleX(1.0387);text-shadow:0 0 1px #000;-webkit-text-stroke:0.25px #eee;">E</div><div class="t" style="left:361.87px;top:573.610px;font-size:8.58px;font-weight:bold;color:#eeeeee;transform:scaleX(0.9181);text-shadow:0 0 1px #000;-webkit-text-stroke:0.25px #eee;">R</div><div class="t" style="left:362.10px;top:580.610px;font-size:8.58px;font-weight:bold;color:#eeeeee;transform:scaleX(0.8387);text-shadow:0 0 1px #000;-webkit-text-stroke:0.25px #eee;">O</div><div class="t" style="left:371.50px;top:555.746px;font-size:38.95px;font-weight:bold;color:#eeeeee;transform:scaleX(0.6036);text-shadow:0 0 1px #000,0 0 1px #000,1px 1px 1px rgba(0,0,0,0.7);-webkit-text-stroke:0.9px #eee;">Y</div><div class="a" style="left:398px;top:555px;width:104px;height:38px;background:#fff;"></div><div class="a" style="left:505.3px;top:559.4px;width:9.7px;height:9.7px;border-radius:50%;background:radial-gradient(circle at 50% 30%,#8a8a8a 0%,#333 22%,#050505 55%,#000 100%);box-shadow:0 0 1px rgba(0,0,0,0.6)"></div><div class="a" style="left:617.2px;top:555.5px;width:53.299999999999955px;height:36.89999999999998px;background:radial-gradient(ellipse at 50% 42%,#52666f 0%,#41535c 45%,#28333a 100%);border:2px solid #15191b;border-radius:6px;box-shadow:inset 0 0 4px rgba(0,0,0,0.55),0 0 1px 1px rgba(0,0,0,0.18);"></div><div class="t" style="left:620.82px;top:564.551px;font-size:20.49px;font-weight:bold;color:#eeeeee;transform:scaleX(0.5713);text-shadow:0 0 1px #000,0 0 1px #000,1px 1px 1px rgba(0,0,0,0.7);">REF Y</div><div class="a" style="left:656.7px;top:561.1px;width:10px;height:10px;border-radius:50%;background:radial-gradient(circle at 50% 30%,#8a8a8a 0%,#333 22%,#050505 55%,#000 100%);box-shadow:0 0 1px rgba(0,0,0,0.6)"></div><div class="a" style="left:357.2px;top:606px;width:34.10000000000002px;height:35.700000000000045px;background:radial-gradient(ellipse at 50% 42%,#52666f 0%,#41535c 45%,#28333a 100%);border:2px solid #15191b;border-radius:5px;box-shadow:inset 0 0 4px rgba(0,0,0,0.55),0 0 1px 1px rgba(0,0,0,0.18);"></div><div class="t" style="left:362.13px;top:609.610px;font-size:8.58px;font-weight:bold;color:#eeeeee;transform:scaleX(1.0552);text-shadow:0 0 1px #000;-webkit-text-stroke:0.25px #eee;">Z</div><div class="t" style="left:361.80px;top:616.610px;font-size:8.58px;font-weight:bold;color:#eeeeee;transform:scaleX(1.0387);text-shadow:0 0 1px #000;-webkit-text-stroke:0.25px #eee;">E</div><div class="t" style="left:361.87px;top:623.610px;font-size:8.58px;font-weight:bold;color:#eeeeee;transform:scaleX(0.9181);text-shadow:0 0 1px #000;-webkit-text-stroke:0.25px #eee;">R</div><div class="t" style="left:362.10px;top:630.610px;font-size:8.58px;font-weight:bold;color:#eeeeee;transform:scaleX(0.8387);text-shadow:0 0 1px #000;-webkit-text-stroke:0.25px #eee;">O</div><div class="t" style="left:371.26px;top:605.746px;font-size:38.95px;font-weight:bold;color:#eeeeee;transform:scaleX(0.5532);text-shadow:0 0 1px #000,0 0 1px #000,1px 1px 1px rgba(0,0,0,0.7);-webkit-text-stroke:0.9px #eee;">Z</div><div class="a" style="left:398px;top:605px;width:104px;height:38px;background:#fff;"></div><div class="a" style="left:505.3px;top:609.4px;width:9.7px;height:9.7px;border-radius:50%;background:radial-gradient(circle at 50% 30%,#8a8a8a 0%,#333 22%,#050505 55%,#000 100%);box-shadow:0 0 1px rgba(0,0,0,0.6)"></div><div class="a" style="left:617.2px;top:605.5px;width:53.299999999999955px;height:36.89999999999998px;background:radial-gradient(ellipse at 50% 42%,#52666f 0%,#41535c 45%,#28333a 100%);border:2px solid #15191b;border-radius:6px;box-shadow:inset 0 0 4px rgba(0,0,0,0.55),0 0 1px 1px rgba(0,0,0,0.18);"></div><div class="t" style="left:620.80px;top:614.551px;font-size:20.49px;font-weight:bold;color:#eeeeee;transform:scaleX(0.5854);text-shadow:0 0 1px #000,0 0 1px #000,1px 1px 1px rgba(0,0,0,0.7);">REF Z</div><div class="a" style="left:656.7px;top:611.1px;width:10px;height:10px;border-radius:50%;background:radial-gradient(circle at 50% 30%,#8a8a8a 0%,#333 22%,#050505 55%,#000 100%);box-shadow:0 0 1px rgba(0,0,0,0.6)"></div><div class="a" style="left:357.2px;top:656px;width:34.10000000000002px;height:35.700000000000045px;background:radial-gradient(ellipse at 50% 42%,#52666f 0%,#41535c 45%,#28333a 100%);border:2px solid #15191b;border-radius:5px;box-shadow:inset 0 0 4px rgba(0,0,0,0.55),0 0 1px 1px rgba(0,0,0,0.18);"></div><div class="t" style="left:362.13px;top:659.610px;font-size:8.58px;font-weight:bold;color:#eeeeee;transform:scaleX(1.0552);text-shadow:0 0 1px #000;-webkit-text-stroke:0.25px #eee;">Z</div><div class="t" style="left:361.80px;top:666.610px;font-size:8.58px;font-weight:bold;color:#eeeeee;transform:scaleX(1.0387);text-shadow:0 0 1px #000;-webkit-text-stroke:0.25px #eee;">E</div><div class="t" style="left:361.87px;top:673.610px;font-size:8.58px;font-weight:bold;color:#eeeeee;transform:scaleX(0.9181);text-shadow:0 0 1px #000;-webkit-text-stroke:0.25px #eee;">R</div><div class="t" style="left:362.10px;top:680.610px;font-size:8.58px;font-weight:bold;color:#eeeeee;transform:scaleX(0.8387);text-shadow:0 0 1px #000;-webkit-text-stroke:0.25px #eee;">O</div><div class="t" style="left:371.36px;top:655.746px;font-size:38.95px;font-weight:bold;color:#eeeeee;transform:scaleX(0.5549);text-shadow:0 0 1px #000,0 0 1px #000,1px 1px 1px rgba(0,0,0,0.7);-webkit-text-stroke:0.9px #eee;">A</div><div class="a" style="left:398px;top:655px;width:104px;height:38px;background:#fff;"></div><div class="a" style="left:505.3px;top:659.4px;width:9.7px;height:9.7px;border-radius:50%;background:radial-gradient(circle at 50% 30%,#8a8a8a 0%,#333 22%,#050505 55%,#000 100%);box-shadow:0 0 1px rgba(0,0,0,0.6)"></div><div class="a" style="left:617.2px;top:655.5px;width:53.299999999999955px;height:36.89999999999998px;background:radial-gradient(ellipse at 50% 42%,#52666f 0%,#41535c 45%,#28333a 100%);border:2px solid #15191b;border-radius:6px;box-shadow:inset 0 0 4px rgba(0,0,0,0.55),0 0 1px 1px rgba(0,0,0,0.18);"></div><div class="t" style="left:620.83px;top:664.551px;font-size:20.49px;font-weight:bold;color:#eeeeee;transform:scaleX(0.5625);text-shadow:0 0 1px #000,0 0 1px #000,1px 1px 1px rgba(0,0,0,0.7);">REF A</div><div class="a" style="left:656.7px;top:661.1px;width:10px;height:10px;border-radius:50%;background:radial-gradient(circle at 50% 30%,#8a8a8a 0%,#333 22%,#050505 55%,#000 100%);box-shadow:0 0 1px rgba(0,0,0,0.6)"></div><div class="t" style="left:419.84px;top:509.239px;font-size:29.51px;color:#000;transform:scaleX(0.8072);">-2.1928</div><div class="t" style="left:538.97px;top:508.550px;font-size:29.94px;color:#fff;transform:scaleX(0.7912);">0.0000</div><div class="t" style="left:427.94px;top:559.239px;font-size:29.51px;color:#000;transform:scaleX(0.8072);">1.8132</div><div class="t" style="left:538.97px;top:558.550px;font-size:29.94px;color:#fff;transform:scaleX(0.7912);">0.0000</div><div class="t" style="left:427.44px;top:608.739px;font-size:29.51px;color:#000;transform:scaleX(0.8072);">6.5484</div><div class="t" style="left:538.97px;top:608.550px;font-size:29.94px;color:#fff;transform:scaleX(0.7912);">0.0000</div><div class="t" style="left:427.67px;top:658.239px;font-size:29.51px;color:#000;transform:scaleX(0.8072);">0.0000</div><div class="t" style="left:538.97px;top:658.550px;font-size:29.94px;color:#fff;transform:scaleX(0.7912);">0.0000</div><div class="t" style="left:355.96px;top:713.920px;font-size:18.46px;font-weight:bold;color:#4a96e6;transform:scaleX(0.6424);">STATUS:</div><div class="t" style="left:355.60px;top:735.718px;font-size:14.24px;color:#eeeeee;transform:scaleX(1.0308);">Press RESET button for Status</div><div class="t" style="left:698.93px;top:478.758px;font-size:21.22px;font-weight:bold;color:#eeeeee;transform:scaleX(0.6033);text-shadow:0 0 1px #000,0 0 1px #000,1px 1px 1px rgba(0,0,0,0.7);">STEP:</div><div class="a" style="left:744.5px;top:470.5px;width:60.799999999999955px;height:35.89999999999998px;background:radial-gradient(ellipse at 50% 42%,#52666f 0%,#41535c 45%,#28333a 100%);border:2px solid #15191b;border-radius:6px;box-shadow:inset 0 0 4px rgba(0,0,0,0.55),0 0 1px 1px rgba(0,0,0,0.18);"></div><div class="t" style="left:752.87px;top:478.258px;font-size:21.22px;font-weight:bold;color:#eeeeee;transform:scaleX(0.6442);text-shadow:0 0 1px #000,0 0 1px #000,1px 1px 1px rgba(0,0,0,0.7);">.0001</div><div class="a" style="left:791.1px;top:475.2px;width:9.7px;height:9.7px;border-radius:50%;background:radial-gradient(circle at 50% 38%,#c9ffb8 0%,#4ef03c 28%,#12b812 60%,#066006 100%);box-shadow:0 0 1px rgba(0,0,0,0.6)"></div><div class="a" style="left:812.4px;top:470.5px;width:60.80000000000007px;height:35.89999999999998px;background:radial-gradient(ellipse at 50% 42%,#52666f 0%,#41535c 45%,#28333a 100%);border:2px solid #15191b;border-radius:6px;box-shadow:inset 0 0 4px rgba(0,0,0,0.55),0 0 1px 1px rgba(0,0,0,0.18);"></div><div class="t" style="left:820.67px;top:478.258px;font-size:21.22px;font-weight:bold;color:#eeeeee;transform:scaleX(0.6477);text-shadow:0 0 1px #000,0 0 1px #000,1px 1px 1px rgba(0,0,0,0.7);">.0010</div><div class="a" style="left:858.1px;top:475.2px;width:9.7px;height:9.7px;border-radius:50%;background:radial-gradient(circle at 50% 30%,#8a8a8a 0%,#333 22%,#050505 55%,#000 100%);box-shadow:0 0 1px rgba(0,0,0,0.6)"></div><div class="a" style="left:880px;top:470.5px;width:60.60000000000002px;height:35.89999999999998px;background:radial-gradient(ellipse at 50% 42%,#52666f 0%,#41535c 45%,#28333a 100%);border:2px solid #15191b;border-radius:6px;box-shadow:inset 0 0 4px rgba(0,0,0,0.55),0 0 1px 1px rgba(0,0,0,0.18);"></div><div class="t" style="left:889.08px;top:478.258px;font-size:21.22px;font-weight:bold;color:#eeeeee;transform:scaleX(0.6399);text-shadow:0 0 1px #000,0 0 1px #000,1px 1px 1px rgba(0,0,0,0.7);">.0100</div><div class="a" style="left:926.1px;top:475.2px;width:9.7px;height:9.7px;border-radius:50%;background:radial-gradient(circle at 50% 30%,#8a8a8a 0%,#333 22%,#050505 55%,#000 100%);box-shadow:0 0 1px rgba(0,0,0,0.6)"></div><div class="a" style="left:948px;top:470.5px;width:61px;height:35.89999999999998px;background:radial-gradient(ellipse at 50% 42%,#52666f 0%,#41535c 45%,#28333a 100%);border:2px solid #15191b;border-radius:6px;box-shadow:inset 0 0 4px rgba(0,0,0,0.55),0 0 1px 1px rgba(0,0,0,0.18);"></div><div class="t" style="left:956.78px;top:478.258px;font-size:21.22px;font-weight:bold;color:#eeeeee;transform:scaleX(0.6379);text-shadow:0 0 1px #000,0 0 1px #000,1px 1px 1px rgba(0,0,0,0.7);">.1000</div><div class="a" style="left:994.5px;top:475.2px;width:9.7px;height:9.7px;border-radius:50%;background:radial-gradient(circle at 50% 30%,#8a8a8a 0%,#333 22%,#050505 55%,#000 100%);box-shadow:0 0 1px rgba(0,0,0,0.6)"></div><div class="a" style="left:694px;top:529.7px;width:186px;height:7.2999999999999545px;background:#d6d6d4;border:1px solid #f6f4f0;box-shadow:inset 0 0 0 1px #707070;"></div><div class="a" style="left:695.5px;top:519.5px;width:42.0px;height:27.799999999999955px;background:linear-gradient(180deg,#8a8a8a,#7a7a7a 50%,#727272);border:1px solid #4e4e4e;border-radius:3px;box-shadow:inset 0 1px 0 rgba(255,255,255,0.15)"></div><div class="a" style="left:712.9px;top:522.7px;width:1.5px;height:21.09999999999991px;background:#2e2e2e"></div><div class="a" style="left:715.9px;top:522.7px;width:1.5px;height:21.09999999999991px;background:#2e2e2e"></div><div class="a" style="left:719.0px;top:522.7px;width:1.5px;height:21.09999999999991px;background:#2e2e2e"></div><div class="t" style="left:908.34px;top:525.058px;font-size:19.33px;color:#d2e8f4;transform:scaleX(0.9932);">1%</div><div class="a" style="left:941.6px;top:516.6px;width:68.0px;height:35.89999999999998px;background:radial-gradient(ellipse at 50% 42%,#52666f 0%,#41535c 45%,#28333a 100%);border:2px solid #15191b;border-radius:6px;box-shadow:inset 0 0 4px rgba(0,0,0,0.55),0 0 1px 1px rgba(0,0,0,0.18);"></div><div class="t" style="left:946.23px;top:522.140px;font-size:23.84px;font-weight:bold;color:#eeeeee;transform:scaleX(0.4783);text-shadow:0 0 1px #000,0 0 1px #000,1px 1px 1px rgba(0,0,0,0.7);">JOG</div><div class="t" style="left:971.69px;top:520.580px;font-size:13.37px;font-weight:bold;color:#eeeeee;transform:scaleX(0.5620);text-shadow:0 0 1px #000,0 0 1px #000,1px 1px 1px rgba(0,0,0,0.7);">CONT</div><div class="t" style="left:971.76px;top:533.941px;font-size:12.50px;font-weight:bold;color:#eeeeee;transform:scaleX(0.6560);text-shadow:0 0 1px #000,0 0 1px #000,1px 1px 1px rgba(0,0,0,0.7);">STEP</div><div class="a" style="left:994.9px;top:522.4px;width:9px;height:9px;border-radius:50%;background:radial-gradient(circle at 50% 38%,#c9ffb8 0%,#4ef03c 28%,#12b812 60%,#066006 100%);box-shadow:0 0 1px rgba(0,0,0,0.6)"></div><div class="a" style="left:994.9px;top:535.4px;width:9px;height:9px;border-radius:50%;background:radial-gradient(circle at 50% 30%,#8a8a8a 0%,#333 22%,#050505 55%,#000 100%);box-shadow:0 0 1px rgba(0,0,0,0.6)"></div><div class="a" style="left:693.8px;top:559.5px;width:310.0px;height:2.0px;background:#e8e8e8"></div><div class="a" style="left:690.4px;top:571.3px;width:63.200000000000045px;height:36.90000000000009px;background:linear-gradient(180deg,#51636b 0%,#5c6e76 18%,#4c5e66 45%,#3f4f57 80%,#36454d 100%);border:2px solid #15191b;border-radius:6px;box-shadow:inset 0 0 4px rgba(0,0,0,0.55),0 0 1px 1px rgba(0,0,0,0.18);"></div><div class="t" style="left:699.85px;top:579.879px;font-size:20.93px;font-weight:bold;color:#eeeeee;transform:scaleX(0.6098);text-shadow:0 0 1px #000,0 0 1px #000,1px 1px 1px rgba(0,0,0,0.7);">REV</div><div class="a" style="left:738.5px;top:575.0px;width:9.7px;height:9.7px;border-radius:50%;background:radial-gradient(circle at 50% 30%,#8a8a8a 0%,#333 22%,#050505 55%,#000 100%);box-shadow:0 0 1px rgba(0,0,0,0.6)"></div><div class="a" style="left:759.4px;top:571.3px;width:62.60000000000002px;height:36.90000000000009px;background:linear-gradient(180deg,#51636b 0%,#5c6e76 18%,#4c5e66 45%,#3f4f57 80%,#36454d 100%);border:2px solid #15191b;border-radius:6px;box-shadow:inset 0 0 4px rgba(0,0,0,0.55),0 0 1px 1px rgba(0,0,0,0.18);"></div><div class="t" style="left:768.34px;top:579.879px;font-size:20.93px;font-weight:bold;color:#eeeeee;transform:scaleX(0.6018);text-shadow:0 0 1px #000,0 0 1px #000,1px 1px 1px rgba(0,0,0,0.7);">STOP</div><div class="a" style="left:827.8px;top:571.3px;width:62.5px;height:36.90000000000009px;background:linear-gradient(180deg,#51636b 0%,#5c6e76 18%,#4c5e66 45%,#3f4f57 80%,#36454d 100%);border:2px solid #15191b;border-radius:6px;box-shadow:inset 0 0 4px rgba(0,0,0,0.55),0 0 1px 1px rgba(0,0,0,0.18);"></div><div class="t" style="left:836.52px;top:579.879px;font-size:20.93px;font-weight:bold;color:#eeeeee;transform:scaleX(0.6303);text-shadow:0 0 1px #000,0 0 1px #000,1px 1px 1px rgba(0,0,0,0.7);">FWD</div><div class="a" style="left:875.2px;top:575.0px;width:9.7px;height:9.7px;border-radius:50%;background:radial-gradient(circle at 50% 30%,#8a8a8a 0%,#333 22%,#050505 55%,#000 100%);box-shadow:0 0 1px rgba(0,0,0,0.6)"></div><div class="a" style="left:896px;top:573px;width:78px;height:33.5px;background:#fff"></div><div class="t" style="left:927.84px;top:574.068px;font-size:31.10px;color:#000;transform:scaleX(0.7870);">0</div><div class="t" style="left:980.10px;top:580.931px;font-size:20.78px;font-weight:bold;color:#eeeeee;transform:scaleX(0.6452);text-shadow:0 0 1px #000,0 0 1px #000,1px 1px 1px rgba(0,0,0,0.7);">RPM</div><div class="a" style="left:688.4px;top:617.1px;width:97.39999999999998px;height:35.89999999999998px;background:radial-gradient(ellipse at 50% 42%,#52666f 0%,#41535c 45%,#28333a 100%);border:2px solid #15191b;border-radius:6px;box-shadow:inset 0 0 4px rgba(0,0,0,0.55),0 0 1px 1px rgba(0,0,0,0.18);"></div><div class="t" style="left:696.92px;top:619.859px;font-size:17.44px;font-weight:bold;color:#eeeeee;transform:scaleX(0.5524);text-shadow:0 0 1px #000,0 0 1px #000,1px 1px 1px rgba(0,0,0,0.7);">SPINDLE</div><div class="t" style="left:696.57px;top:634.859px;font-size:17.44px;font-weight:bold;color:#eeeeee;transform:scaleX(0.5431);text-shadow:0 0 1px #000,0 0 1px #000,1px 1px 1px rgba(0,0,0,0.7);">RANGE</div><div class="t" style="left:756.28px;top:619.979px;font-size:17.15px;font-weight:bold;color:#eeeeee;transform:scaleX(0.6260);text-shadow:0 0 1px #000,0 0 1px #000,1px 1px 1px rgba(0,0,0,0.7);">HI</div><div class="t" style="left:756.51px;top:634.979px;font-size:17.15px;font-weight:bold;color:#eeeeee;transform:scaleX(0.4237);text-shadow:0 0 1px #000,0 0 1px #000,1px 1px 1px rgba(0,0,0,0.7);">LO</div><div class="a" style="left:771.0px;top:622.2px;width:9px;height:9px;border-radius:50%;background:radial-gradient(circle at 50% 38%,#c9ffb8 0%,#4ef03c 28%,#12b812 60%,#066006 100%);box-shadow:0 0 1px rgba(0,0,0,0.6)"></div><div class="a" style="left:771.0px;top:637.5px;width:9px;height:9px;border-radius:50%;background:radial-gradient(circle at 50% 30%,#8a8a8a 0%,#333 22%,#050505 55%,#000 100%);box-shadow:0 0 1px rgba(0,0,0,0.6)"></div><div class="t" style="left:820.76px;top:625.879px;font-size:20.93px;font-weight:bold;color:#eeeeee;transform:scaleX(0.6025);text-shadow:0 0 1px #000,0 0 1px #000,1px 1px 1px rgba(0,0,0,0.7);">FEEDRATE:</div><div class="a" style="left:896px;top:617.8px;width:78px;height:34.200000000000045px;background:#fff"></div><div class="t" style="left:917.76px;top:619.377px;font-size:30.38px;color:#000;transform:scaleX(0.7903);">0.0</div><div class="t" style="left:976.85px;top:625.879px;font-size:20.93px;font-weight:bold;color:#eeeeee;transform:scaleX(0.7518);text-shadow:0 0 1px #000,0 0 1px #000,1px 1px 1px rgba(0,0,0,0.7);">/MIN</div><div class="a" style="left:693.8px;top:663px;width:310.0px;height:2px;background:#e8e8e8"></div><div class="t" style="left:690.63px;top:673.007px;font-size:41.86px;font-weight:bold;color:#fafafa;transform:scaleX(0.5720);text-shadow:0 0 1px rgba(0,0,0,0.3);">T</div><div class="a" style="left:709.9px;top:675.2px;width:70.10000000000002px;height:37.59999999999991px;background:#fff"></div><div class="t" style="left:737.73px;top:678.688px;font-size:30.81px;color:#000;transform:scaleX(0.8080);">0</div><div class="a" style="left:787.5px;top:675.9px;width:49.89999999999998px;height:36.200000000000045px;background:radial-gradient(ellipse at 50% 42%,#52666f 0%,#41535c 45%,#28333a 100%);border:2px solid #15191b;border-radius:6px;box-shadow:inset 0 0 4px rgba(0,0,0,0.55),0 0 1px 1px rgba(0,0,0,0.18);"></div><div class="t" style="left:791.12px;top:682.578px;font-size:22.82px;font-weight:bold;color:#eeeeee;transform:scaleX(0.5113);text-shadow:0 0 1px #000,0 0 1px #000,1px 1px 1px rgba(0,0,0,0.7);">M6 G43</div><div class="t" style="left:843.80px;top:676.797px;font-size:16.42px;font-weight:bold;color:#eeeeee;transform:scaleX(0.5456);text-shadow:0 0 1px #000,0 0 1px #000,1px 1px 1px rgba(0,0,0,0.7);">TOOL LENGTH</div><div class="t" style="left:854.61px;top:695.941px;font-size:12.50px;color:#e4e4e4;transform:scaleX(1.0092);">0.0000</div><div class="a" style="left:913.2px;top:675.2px;width:97.39999999999998px;height:35.799999999999955px;background:linear-gradient(180deg,#51636b 0%,#5c6e76 18%,#4c5e66 45%,#3f4f57 80%,#36454d 100%);border:2px solid #15191b;border-radius:6px;box-shadow:inset 0 0 4px rgba(0,0,0,0.55),0 0 1px 1px rgba(0,0,0,0.18);"></div><div class="t" style="left:924.66px;top:681.640px;font-size:23.84px;font-weight:bold;color:#eeeeee;transform:scaleX(0.5540);text-shadow:0 0 1px #000,0 0 1px #000,1px 1px 1px rgba(0,0,0,0.7);">GO TO G30</div><div class="a" style="left:687px;top:727.1px;width:107.29999999999995px;height:26.0px;background:#fff"></div><svg class="a" style="left:687px;top:727px" width="108" height="26" viewBox="687 727 108 26">
<g fill="none" stroke="#1f3449" stroke-width="3" stroke-linejoin="miter">
<path d="M691.5 749.3 V731.8 H699.8 Q701.6 731.8 701.6 733.6 V737.6 Q701.6 739.4 699.8 739.4 H691.5"/>
<path d="M704.5 737 H711.5 Q713.1 737 713.1 738.6 V749.3 M713.1 747.8 H706 Q704.5 747.8 704.5 746.3 V743.6 Q704.5 742.1 706 742.1 H713.1"/>
<path d="M717.8 730.3 V746 Q717.8 747.8 719.6 747.8 H722.5 M715.5 737 H722"/>
<path d="M726.9 730.3 V749.3 M726.9 737 H733.7 Q735.3 737 735.3 738.6 V749.3"/>
</g>
<path d="M693 735.3 H697.5 L697.5 733.8 L700 735.8 L697.5 737.8 V736.3 H693 Z" fill="#fff"/>
<g fill="none" stroke="#8fa63a" stroke-width="3">
<path d="M740.6 749.3 V731.8 H748.8 Q750.6 731.8 750.6 733.6 V737.4 Q750.6 739.2 748.8 739.2 H740.6"/>
<path d="M755.2 733 V749.3"/>
<path d="M760.2 730.6 V749.3"/>
<path d="M766.2 749 V738.8 Q766.2 737.2 767.8 737.2 H773 M766.2 747.7 H773.3 Q774.8 747.7 774.8 746.2 V740"/>
<path d="M780.7 730.6 V746.2 Q780.7 747.8 782.3 747.8 H783.5"/>
</g>
<path d="M773 736.2 H789.5 V734.2 L793 737.2 L789.5 740.2 V738.2 H773 Z" fill="#8fa63a"/>
<circle cx="785.7" cy="731.7" r="2.1" fill="none" stroke="#44546a" stroke-width="1"/>
</svg><div class="t" style="left:799.91px;top:725.968px;font-size:14.83px;font-weight:bold;color:#eeeeee;transform:scaleX(0.6288);text-shadow:0 0 1px #000,0 0 1px #000,1px 1px 1px rgba(0,0,0,0.7);">1100M</div><div class="t" style="left:800.44px;top:741.839px;font-size:13.95px;font-weight:bold;color:#eeeeee;transform:scaleX(0.6148);text-shadow:0 0 1px #000,0 0 1px #000,1px 1px 1px rgba(0,0,0,0.7);">V2.9.1</div><div class="a" style="left:935.4px;top:721.3px;width:75.20000000000005px;height:30.100000000000023px;background:linear-gradient(180deg,#51636b 0%,#5c6e76 18%,#4c5e66 45%,#3f4f57 80%,#36454d 100%);border:2px solid #15191b;border-radius:6px;box-shadow:inset 0 0 4px rgba(0,0,0,0.55),0 0 1px 1px rgba(0,0,0,0.18);"></div><div class="t" style="left:943.17px;top:726.931px;font-size:20.78px;font-weight:bold;color:#eeeeee;transform:scaleX(0.5968);text-shadow:0 0 1px #000,0 0 1px #000,1px 1px 1px rgba(0,0,0,0.7);">EXIT</div><svg class="a" style="left:309px;top:402px" width="14" height="21"><path d="M1 1 L1 16 L4.5 12.5 L7.5 19 L10 18 L7 11.5 L12 11.5 Z" fill="#fff" stroke="#000" stroke-width="1.2" stroke-linejoin="round"/></svg></body></html>
